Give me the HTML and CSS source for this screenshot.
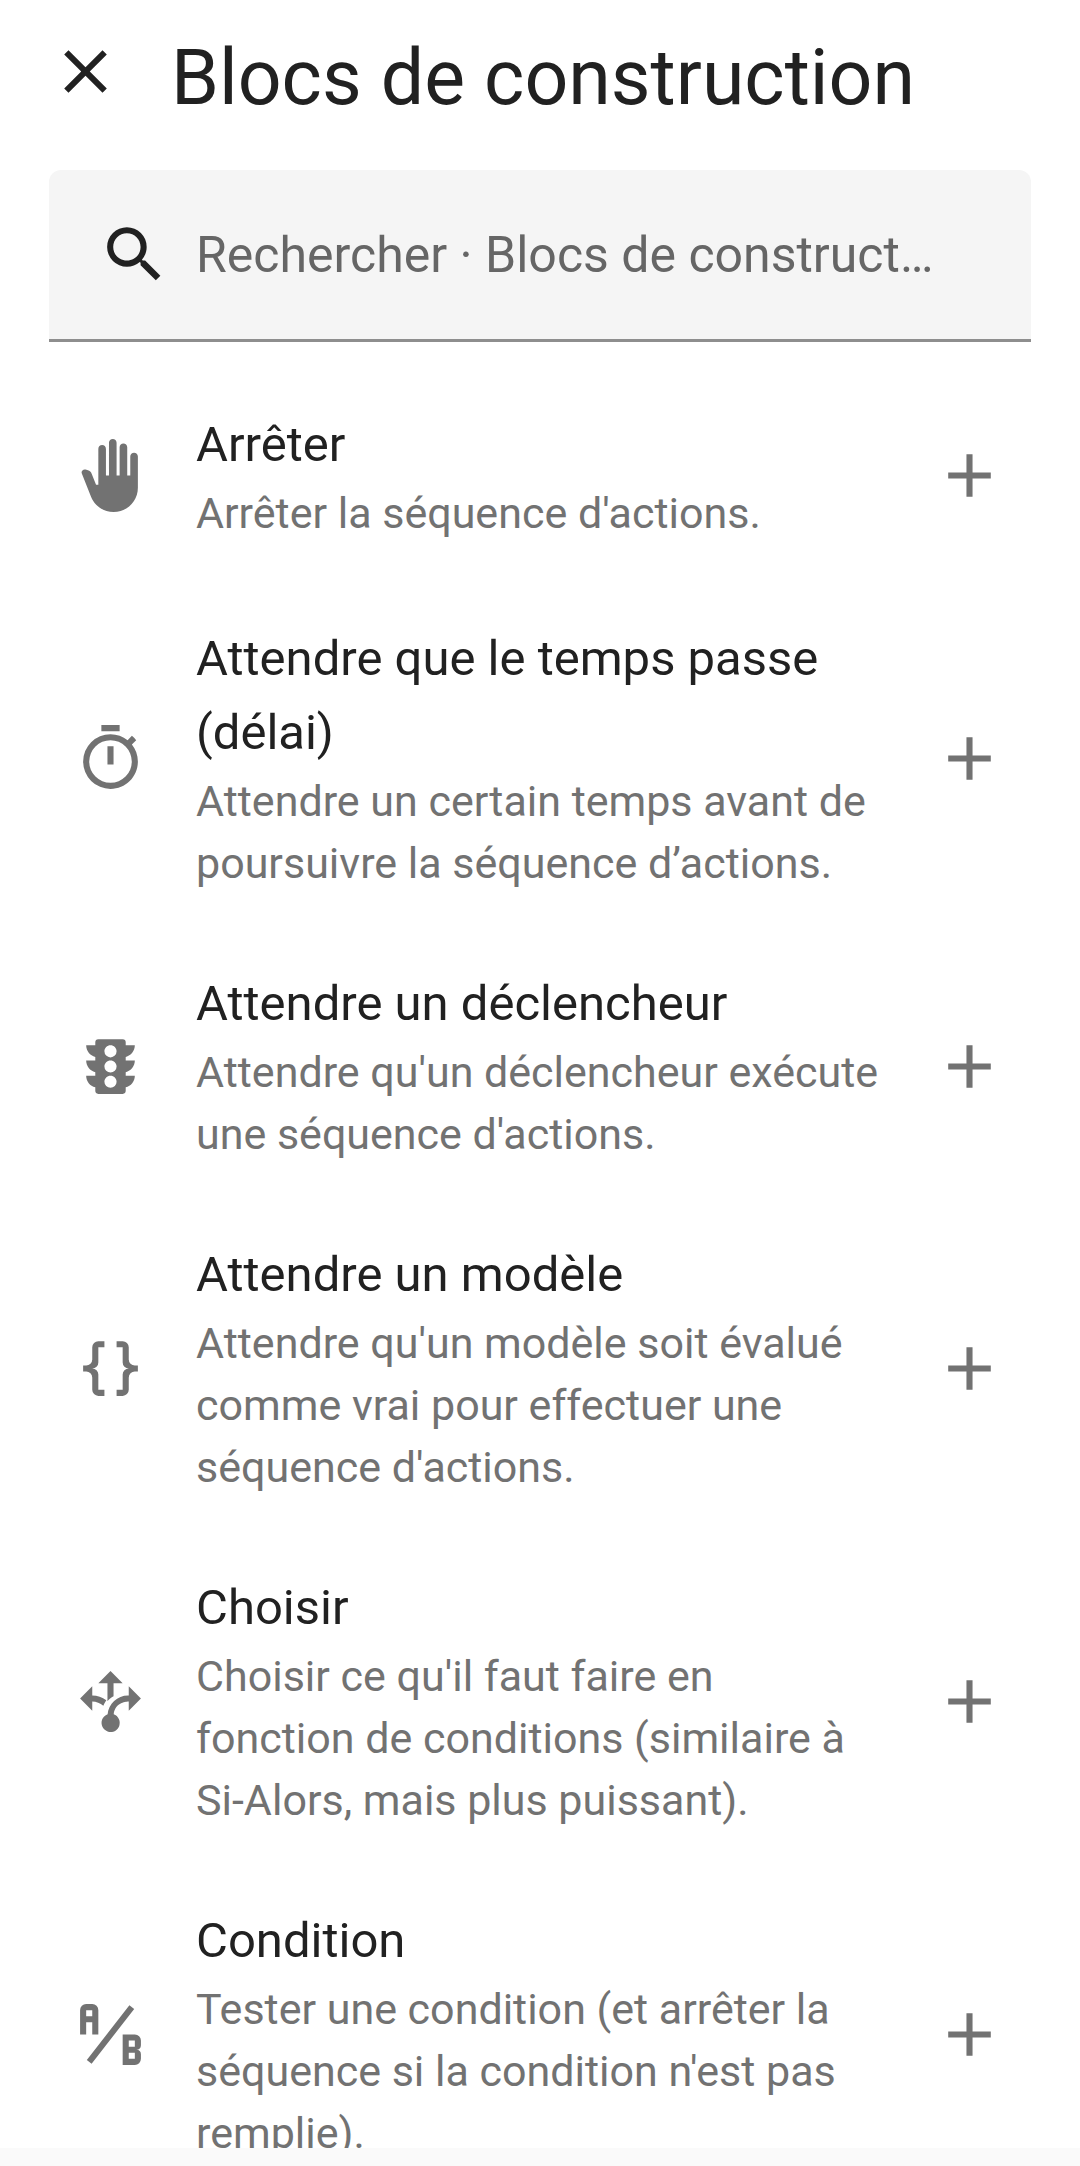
FILE: index.html
```html
<!DOCTYPE html>
<html lang="fr">
<head>
<meta charset="utf-8">
<meta name="viewport" content="width=device-width, initial-scale=1">
<title>Blocs de construction</title>
<link rel="stylesheet" href="styles.css">
</head>
<body>
<main class="dialog">
  <header class="header">
    <button class="icon-button close" type="button" aria-label="Fermer">
      <svg class="icon" viewBox="0 0 24 24" aria-hidden="true"><path d="M19,6.41L17.59,5L12,10.59L6.41,5L5,6.41L10.59,12L5,17.59L6.41,19L12,13.41L17.59,19L19,17.59L13.41,12L19,6.41Z"/></svg>
    </button>
    <h1 class="title">Blocs de construction</h1>
  </header>

  <label class="search">
    <svg class="icon" viewBox="0 0 24 24" aria-hidden="true"><path d="M9.5,3A6.5,6.5 0 0,1 16,9.5C16,11.11 15.41,12.59 14.44,13.73L14.71,14H15.5L20.5,19L19,20.5L14,15.5V14.71L13.73,14.44C12.59,15.41 11.11,16 9.5,16A6.5,6.5 0 0,1 3,9.5A6.5,6.5 0 0,1 9.5,3M9.5,5C7,5 5,7 5,9.5C5,12 7,14 9.5,14C12,14 14,12 14,9.5C14,7 12,5 9.5,5Z"/></svg>
    <input class="search-input" type="text" aria-label="Rechercher" placeholder="Rechercher · Blocs de construction">
  </label>

  <ul class="list">
    <li class="item">
      <svg class="icon" viewBox="0 0 24 24" aria-hidden="true"><path d="M13 24C9.74 24 6.81 22 5.6 19L2.57 11.37C2.26 10.58 3 9.79 3.81 10.05L4.6 10.31C5.16 10.5 5.62 10.92 5.84 11.47L7.25 15H8V3.25C8 2.56 8.56 2 9.25 2S10.5 2.56 10.5 3.25V12H11.5V1.25C11.5 .56 12.06 0 12.75 0S14 .56 14 1.25V12H15V2.75C15 2.06 15.56 1.5 16.25 1.5C16.94 1.5 17.5 2.06 17.5 2.75V12H18.5V5.75C18.5 5.06 19.06 4.5 19.75 4.5S21 5.06 21 5.75V16C21 20.42 17.42 24 13 24Z"/></svg>
      <div class="text">
        <h2 class="headline">Arrêter</h2>
        <p class="supporting">Arrêter la séquence d'actions.</p>
      </div>
      <button class="icon-button" type="button" aria-label="Ajouter Arrêter"><svg class="icon" viewBox="0 0 24 24" aria-hidden="true"><path d="M19,13H13V19H11V13H5V11H11V5H13V11H19V13Z"/></svg></button>
    </li>
    <li class="item">
      <svg class="icon" viewBox="0 0 24 24" aria-hidden="true"><path d="M12,20A7,7 0 0,1 5,13A7,7 0 0,1 12,6A7,7 0 0,1 19,13A7,7 0 0,1 12,20M19.03,7.39L20.45,5.97C20,5.46 19.55,5 19.04,4.56L17.62,6C16.07,4.74 14.12,4 12,4A9,9 0 0,0 3,13A9,9 0 0,0 12,22C17,22 21,17.97 21,13C21,10.88 20.26,8.93 19.03,7.39M11,14H13V8H11M15,1H9V3H15V1Z"/></svg>
      <div class="text">
        <h2 class="headline">Attendre que le temps passe (délai)</h2>
        <p class="supporting">Attendre un certain temps avant de poursuivre la séquence d’actions.</p>
      </div>
      <button class="icon-button" type="button" aria-label="Ajouter Attendre que le temps passe"><svg class="icon" viewBox="0 0 24 24" aria-hidden="true"><path d="M19,13H13V19H11V13H5V11H11V5H13V11H19V13Z"/></svg></button>
    </li>
    <li class="item">
      <svg class="icon" viewBox="0 0 24 24" aria-hidden="true"><path d="M12,9A2,2 0 0,1 10,7C10,5.89 10.9,5 12,5C13.11,5 14,5.89 14,7A2,2 0 0,1 12,9M12,14A2,2 0 0,1 10,12C10,10.89 10.9,10 12,10C13.11,10 14,10.89 14,12A2,2 0 0,1 12,14M12,19A2,2 0 0,1 10,17C10,15.89 10.9,15 12,15C13.11,15 14,15.89 14,17A2,2 0 0,1 12,19M20,10H17V8.86C18.72,8.41 20,6.86 20,5H17V4A1,1 0 0,0 16,3H8A1,1 0 0,0 7,4V5H4C4,6.86 5.28,8.41 7,8.86V10H4C4,11.86 5.28,13.41 7,13.86V15H4C4,16.86 5.28,18.41 7,18.86V20A1,1 0 0,0 8,21H16A1,1 0 0,0 17,20V18.86C18.72,18.41 20,16.86 20,15H17V13.86C18.72,13.41 20,11.86 20,10Z"/></svg>
      <div class="text">
        <h2 class="headline">Attendre un déclencheur</h2>
        <p class="supporting">Attendre qu'un déclencheur exécute une séquence d'actions.</p>
      </div>
      <button class="icon-button" type="button" aria-label="Ajouter Attendre un déclencheur"><svg class="icon" viewBox="0 0 24 24" aria-hidden="true"><path d="M19,13H13V19H11V13H5V11H11V5H13V11H19V13Z"/></svg></button>
    </li>
    <li class="item">
      <svg class="icon" viewBox="0 0 24 24" aria-hidden="true"><path d="M8,3A2,2 0 0,0 6,5V9A2,2 0 0,1 4,11H3V13H4A2,2 0 0,1 6,15V19A2,2 0 0,0 8,21H10V19H8V14A2,2 0 0,0 6,12A2,2 0 0,0 8,10V5H10V3M16,3A2,2 0 0,1 18,5V9A2,2 0 0,0 20,11H21V13H20A2,2 0 0,0 18,15V19A2,2 0 0,1 16,21H14V19H16V14A2,2 0 0,1 18,12A2,2 0 0,1 16,10V5H14V3H16Z"/></svg>
      <div class="text">
        <h2 class="headline">Attendre un modèle</h2>
        <p class="supporting">Attendre qu'un modèle soit évalué comme vrai pour effectuer une séquence d'actions.</p>
      </div>
      <button class="icon-button" type="button" aria-label="Ajouter Attendre un modèle"><svg class="icon" viewBox="0 0 24 24" aria-hidden="true"><path d="M19,13H13V19H11V13H5V11H11V5H13V11H19V13Z"/></svg></button>
    </li>
    <li class="item">
      <svg class="icon" viewBox="0 0 24 24" aria-hidden="true"><path d="M9.64,13.4C8.63,12.5 7.34,12.03 6,12V15L2,11L6,7V10C7.67,10 9.3,10.57 10.63,11.59C10.22,12.15 9.89,12.76 9.64,13.4M18,15V12C17.5,12 13.5,12.16 13.05,16.2C14.61,16.75 15.43,18.47 14.88,20.03C14.33,21.59 12.61,22.41 11.05,21.86C9.5,21.3 8.67,19.59 9.22,18.03C9.5,17.17 10.2,16.5 11.05,16.2C11.34,12.61 14.4,9.88 18,10V7L22,11L18,15M13,6H16L12,2L8,6H11V11.93C11.5,11.3 12.2,10.72 13,10.3V6Z"/></svg>
      <div class="text">
        <h2 class="headline">Choisir</h2>
        <p class="supporting">Choisir ce qu'il faut faire en fonction de conditions (similaire à Si-Alors, mais plus puissant).</p>
      </div>
      <button class="icon-button" type="button" aria-label="Ajouter Choisir"><svg class="icon" viewBox="0 0 24 24" aria-hidden="true"><path d="M19,13H13V19H11V13H5V11H11V5H13V11H19V13Z"/></svg></button>
    </li>
    <li class="item">
      <svg class="icon" viewBox="0 0 24 24" aria-hidden="true"><path d="M4 2A2 2 0 0 0 2 4V12H4V8H6V12H8V4A2 2 0 0 0 6 2H4M4 4H6V6H4M22 15.5V14A2 2 0 0 0 20 12H16V22H20A2 2 0 0 0 22 20V18.5A1.54 1.54 0 0 0 20.5 17A1.54 1.54 0 0 0 22 15.5M20 20H18V18H20V20M20 16H18V14H20M5.79 21.61L4.21 20.39L18.21 2.39L19.79 3.61Z"/></svg>
      <div class="text">
        <h2 class="headline">Condition</h2>
        <p class="supporting">Tester une condition (et arrêter la séquence si la condition n'est pas remplie).</p>
      </div>
      <button class="icon-button" type="button" aria-label="Ajouter Condition"><svg class="icon" viewBox="0 0 24 24" aria-hidden="true"><path d="M19,13H13V19H11V13H5V11H11V5H13V11H19V13Z"/></svg></button>
    </li>
  </ul>
</main>
</body>
</html>
```
FILE: styles.css
```css
* {
  box-sizing: border-box;
}

body {
  margin: 0;
  height: 100vh;
  padding-bottom: 18px;
  background: #fafafa;
  color: #212121;
  font-family: Roboto, "Noto Sans", sans-serif;
}

.dialog {
  display: flex;
  flex-direction: column;
  height: 100%;
  overflow: hidden;
  background: #fff;
}

.icon {
  display: block;
  flex: none;
  width: 73px;
  height: 73px;
  fill: currentColor;
}

.icon-button {
  flex: none;
  padding: 0;
  border: 0;
  background: none;
  color: inherit;
  cursor: pointer;
}

.header {
  display: flex;
  align-items: flex-start;
  gap: 49px;
  padding: 32px 49px 46px;
}

.close {
  padding-top: 3px;
}

.title {
  margin: 0;
  font-size: 77px;
  font-weight: 400;
  line-height: 92px;
}

.search {
  display: flex;
  flex: none;
  align-items: center;
  gap: 25px;
  height: 172px;
  margin: 0 49px;
  padding: 0 92px 0 49px;
  border-bottom: 3px solid #8e8e8e;
  border-radius: 12px 12px 0 0;
  background: #f5f5f5;
}

.search-input {
  flex: 1;
  min-width: 0;
  padding: 0;
  border: 0;
  outline: 0;
  background: none;
  color: inherit;
  font: inherit;
  font-size: 50px;
  line-height: 74px;
  text-overflow: ellipsis;
}

.search-input::placeholder {
  color: #666;
  opacity: 1;
}

.list {
  flex: 1;
  min-height: 0;
  margin: 0;
  padding: 23px 0 0;
  overflow: hidden;
  list-style: none;
}

.item {
  display: flex;
  align-items: center;
  gap: 49px;
  min-height: 220px;
  padding: 37px 74px 36px;
  color: #727272;
}

.text {
  flex: 1;
  min-width: 0;
  padding-right: 3px;
}

.headline {
  margin: 0;
  color: #212121;
  font-size: 49px;
  font-weight: 400;
  line-height: 74px;
}

.supporting {
  margin: 0;
  font-size: 43px;
  line-height: 62px;
}
```
